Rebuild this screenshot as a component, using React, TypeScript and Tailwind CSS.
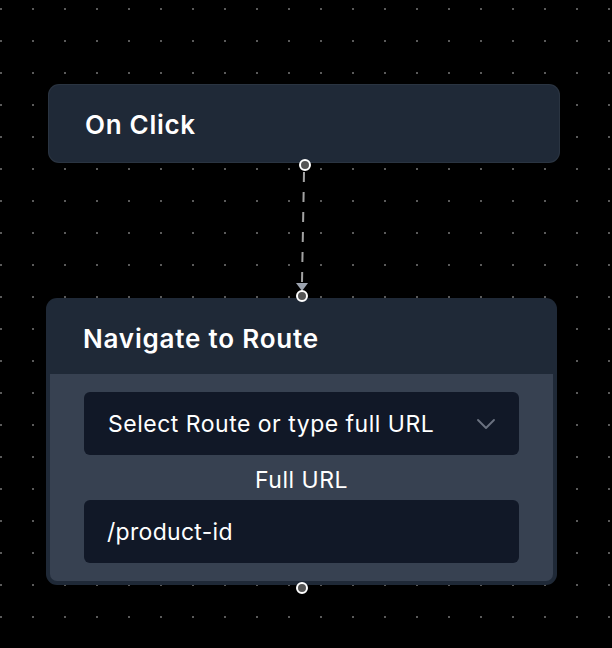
import { ChevronDown } from "lucide-react";

const Handle = ({ className }: { className: string }) => (
  <div className={`absolute w-[12px] h-[12px] rounded-full bg-[#555555] border-2 border-white ${className}`} />
);

const App: React.FC = () => {
  return (
    <div
      className="relative w-[612px] h-[648px] overflow-hidden bg-black bg-[radial-gradient(circle,#5a5a5a_1px,transparent_1.2px)] bg-[length:32px_32px] bg-[position:-15px_-7px]"
      style={{ fontFamily: "Inter, 'Noto Sans', sans-serif" }}
    >
      {/* edge */}
      <svg className="absolute left-0 top-0" width="612" height="648">
        <line x1="304" y1="172" x2="302" y2="283" stroke="#a3a3a3" strokeWidth="2" strokeDasharray="10 10" />
        <polygon points="296,283 308,283 302,291" fill="#9ca3af" />
      </svg>

      {/* trigger node */}
      <div className="absolute left-[48px] top-[84px] w-[512px] h-[79px] rounded-[11px] bg-[#1f2937] border border-white/5 flex items-center pl-[36px]">
        <span className="text-[26px] font-semibold text-white tracking-[0.7px] pt-[1px]">On Click</span>
        <Handle className="left-[250px] bottom-[-9px]" />
      </div>

      {/* action node */}
      <div className="absolute left-[46px] top-[298px] w-[511px] rounded-[11px] bg-[#1f2937] px-[4px] pb-[4px]">
        <Handle className="left-[250px] top-[-8px]" />
        <div className="h-[76px] flex items-center pl-[33px] pt-[4px]">
          <span className="text-[26px] font-semibold text-white tracking-[0.8px]">Navigate to Route</span>
        </div>
        <div className="bg-[#374151] rounded-b-[7px] px-[34px] pt-[18px] pb-[18px] flex flex-col">
          <div className="h-[63px] rounded-[6px] bg-[#111827] flex items-center justify-between pl-[24px] pr-[17px]">
            <span className="text-[23px] text-white tracking-[0.5px] pt-[2px]">Select Route or type full URL</span>
            <ChevronDown className="text-[#6b7280]" size={32} strokeWidth={1.4} />
          </div>
          <div className="text-center text-[23px] text-white tracking-[0.5px] h-[45px] flex items-center justify-center pt-[5px]">Full URL</div>
          <div className="h-[63px] rounded-[6px] bg-[#111827] flex items-center pl-[23px]">
            <span className="text-[23px] text-white tracking-[0.3px] pt-[1px]">/product-id</span>
          </div>
        </div>
        <Handle className="left-[250px] bottom-[-9px]" />
      </div>
    </div>
  );
};

export default App;
